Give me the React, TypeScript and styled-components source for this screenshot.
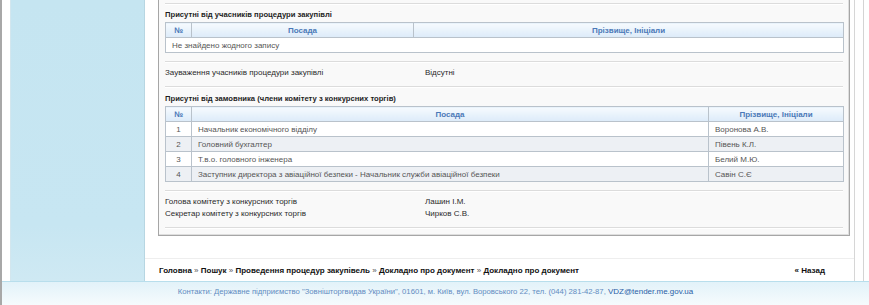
import React from "react";
import styled, { createGlobalStyle } from "styled-components";

const Global = createGlobalStyle`
  html, body { margin: 0; padding: 0; background: #fff; }
  body { font-family: "Liberation Sans", Arial, sans-serif; font-size: 8px; color: #333; }
  * { box-sizing: border-box; }
`;

const Page = styled.div`
  width: 869px;
  height: 305px;
  overflow: hidden;
  display: flex;
  flex-direction: column;
  border-left: 2px solid #a8a8a8;
`;

const Body = styled.div`
  display: flex;
  height: 281px;
`;

const LeftGap = styled.div`
  width: 9px;
  background: #fff;
  border-right: 1px solid #d3e6ee;
`;

const Sidebar = styled.div`
  width: 134px;
  background: linear-gradient(#c5e5f1 0%, #c7e6f2 80%, #cfe9f3 100%);
  border-right: 1px solid #b7d6e2;
`;

const Main = styled.div`
  width: 710px;
  background: #fff;
  display: flex;
  flex-direction: column;
  border-right: 1px solid #d6d6d6;
`;

const RightGutter = styled.div`
  flex: 1;
  background: #fff;
  display: flex;
  justify-content: flex-end;
  padding-right: 4px;
`;

const ScrollTrack = styled.div`
  width: 2px;
  border-left: 1px solid #d4d4d4;
`;

const PanelWrap = styled.div`
  padding: 0 4px 0 13px;
`;

const Panel = styled.div`
  background: #f9f9f9;
  border: 1px solid #a6a6a6;
  border-top: none;
  box-shadow: inset -1px -1px 0 #dedede;
  padding: 3px 6px 6px 6px;
`;

const Sep = styled.div<{ $mt?: number }>`
  margin-top: ${(p) => p.$mt ?? 0}px;
  height: 2px;
  border-top: 1px solid #dcdcdc;
  border-bottom: 1px solid #ffffff;
`;

const Title = styled.div<{ $mt?: number }>`
  margin-top: ${(p) => p.$mt ?? 0}px;
  font-weight: bold;
  font-size: 7.65px;
  color: #1e1e1e;
  line-height: 12px;
`;

const InfoRow = styled.div<{ $mt?: number }>`
  margin-top: ${(p) => p.$mt ?? 0}px;
  display: grid;
  grid-template-columns: 260px 1fr;
  line-height: 12px;
  color: #2a2a2a;
`;

const Table = styled.table<{ $mt?: number }>`
  margin-top: ${(p) => p.$mt ?? 0}px;
  width: 679px;
  border-collapse: collapse;
  table-layout: fixed;
  border: 1px solid #b9c2cb;
`;

const Th = styled.th`
  height: 15px;
  padding: 0;
  font-weight: bold;
  color: #4b79b8;
  text-align: center;
  background: linear-gradient(#f6fafe, #dcebf9);
  border: 1px solid #b9c2cb;
  line-height: 13px;
`;

const Tr = styled.tr<{ $alt?: boolean }>`
  background: ${(p) => (p.$alt ? "#edf0f4" : "#ffffff")};
`;

const Td = styled.td<{ $center?: boolean }>`
  height: 15px;
  padding: 0 6px;
  color: #555;
  text-align: ${(p) => (p.$center ? "center" : "left")};
  border: 1px solid #b9c2cb;
  line-height: 13px;
  white-space: nowrap;
  overflow: hidden;
`;

const Crumbs = styled.div`
  margin-top: 22px;
  border-top: 1px solid #eeeeee;
  height: 24px;
  display: flex;
  align-items: center;
  justify-content: space-between;
  padding: 0 29px 0 14px;
  font-weight: bold;
  font-size: 8px;
  color: #111;
`;

const Sep2 = styled.span`
  color: #555;
  font-weight: normal;
`;

const Footer = styled.div`
  flex: 1;
  border-top: 1px solid #b8deec;
  background: linear-gradient(#e2f2f9, #f6fbfd);
  text-align: center;
  padding-top: 5px;
  line-height: 10px;
  color: #628cc1;
  font-size: 7.7px;
`;

const Mail = styled.span`
  color: #2a5ea6;
  font-size: 8px;
`;

const members = [
  ["1", "Начальник економічного відділу", "Воронова А.В."],
  ["2", "Головний бухгалтер", "Півень К.Л."],
  ["3", "Т.в.о. головного інженера", "Белий М.Ю."],
  ["4", "Заступник директора з авіаційної безпеки - Начальник служби авіаційної безпеки", "Савін С.Є"],
];

export default function App() {
  return (
    <Page>
      <Global />
      <Body>
        <LeftGap />
        <Sidebar />
        <Main>
          <PanelWrap>
            <Panel>
              <Sep />
              <Title $mt={4}>Присутні від учасників процедури закупівлі</Title>
              <Table $mt={1}>
                <colgroup>
                  <col style={{ width: 26 }} />
                  <col style={{ width: 222 }} />
                  <col />
                </colgroup>
                <thead>
                  <tr>
                    <Th>№</Th>
                    <Th>Посада</Th>
                    <Th>Прізвище, Ініціали</Th>
                  </tr>
                </thead>
                <tbody>
                  <Tr>
                    <Td colSpan={3}>Не знайдено жодного запису</Td>
                  </Tr>
                </tbody>
              </Table>
              <Sep $mt={8} />
              <InfoRow $mt={4}>
                <span>Зауваження учасників процедури закупівлі</span>
                <span>Відсутні</span>
              </InfoRow>
              <Sep $mt={7} />
              <Title $mt={5}>Присутні від замовника (члени комітету з конкурсних торгів)</Title>
              <Table $mt={1}>
                <colgroup>
                  <col style={{ width: 26 }} />
                  <col style={{ width: 517 }} />
                  <col />
                </colgroup>
                <thead>
                  <tr>
                    <Th>№</Th>
                    <Th>Посада</Th>
                    <Th>Прізвище, Ініціали</Th>
                  </tr>
                </thead>
                <tbody>
                  {members.map((m, i) => (
                    <Tr key={m[0]} $alt={i % 2 === 1}>
                      <Td $center>{m[0]}</Td>
                      <Td>{m[1]}</Td>
                      <Td>{m[2]}</Td>
                    </Tr>
                  ))}
                </tbody>
              </Table>
              <Sep $mt={8} />
              <InfoRow $mt={4}>
                <span>Голова комітету з конкурсних торгів</span>
                <span>Лашин І.М.</span>
              </InfoRow>
              <InfoRow>
                <span>Секретар комітету з конкурсних торгів</span>
                <span>Чирков С.В.</span>
              </InfoRow>
              <Sep $mt={7} />
            </Panel>
          </PanelWrap>
          <Crumbs>
            <span>
              Головна <Sep2>»</Sep2> Пошук <Sep2>»</Sep2> Проведення процедур закупівель <Sep2>»</Sep2> Докладно про документ <Sep2>»</Sep2> Докладно про документ
            </span>
            <span>« Назад</span>
          </Crumbs>
        </Main>
        <RightGutter>
          <ScrollTrack />
        </RightGutter>
      </Body>
      <Footer>
        Контакти: Державне підприємство "Зовнішторгвидав України", 01601, м. Київ, вул. Воровського 22, тел. (044) 281-42-87,{" "}
        <Mail>VDZ@tender.me.gov.ua</Mail>
      </Footer>
    </Page>
  );
}
